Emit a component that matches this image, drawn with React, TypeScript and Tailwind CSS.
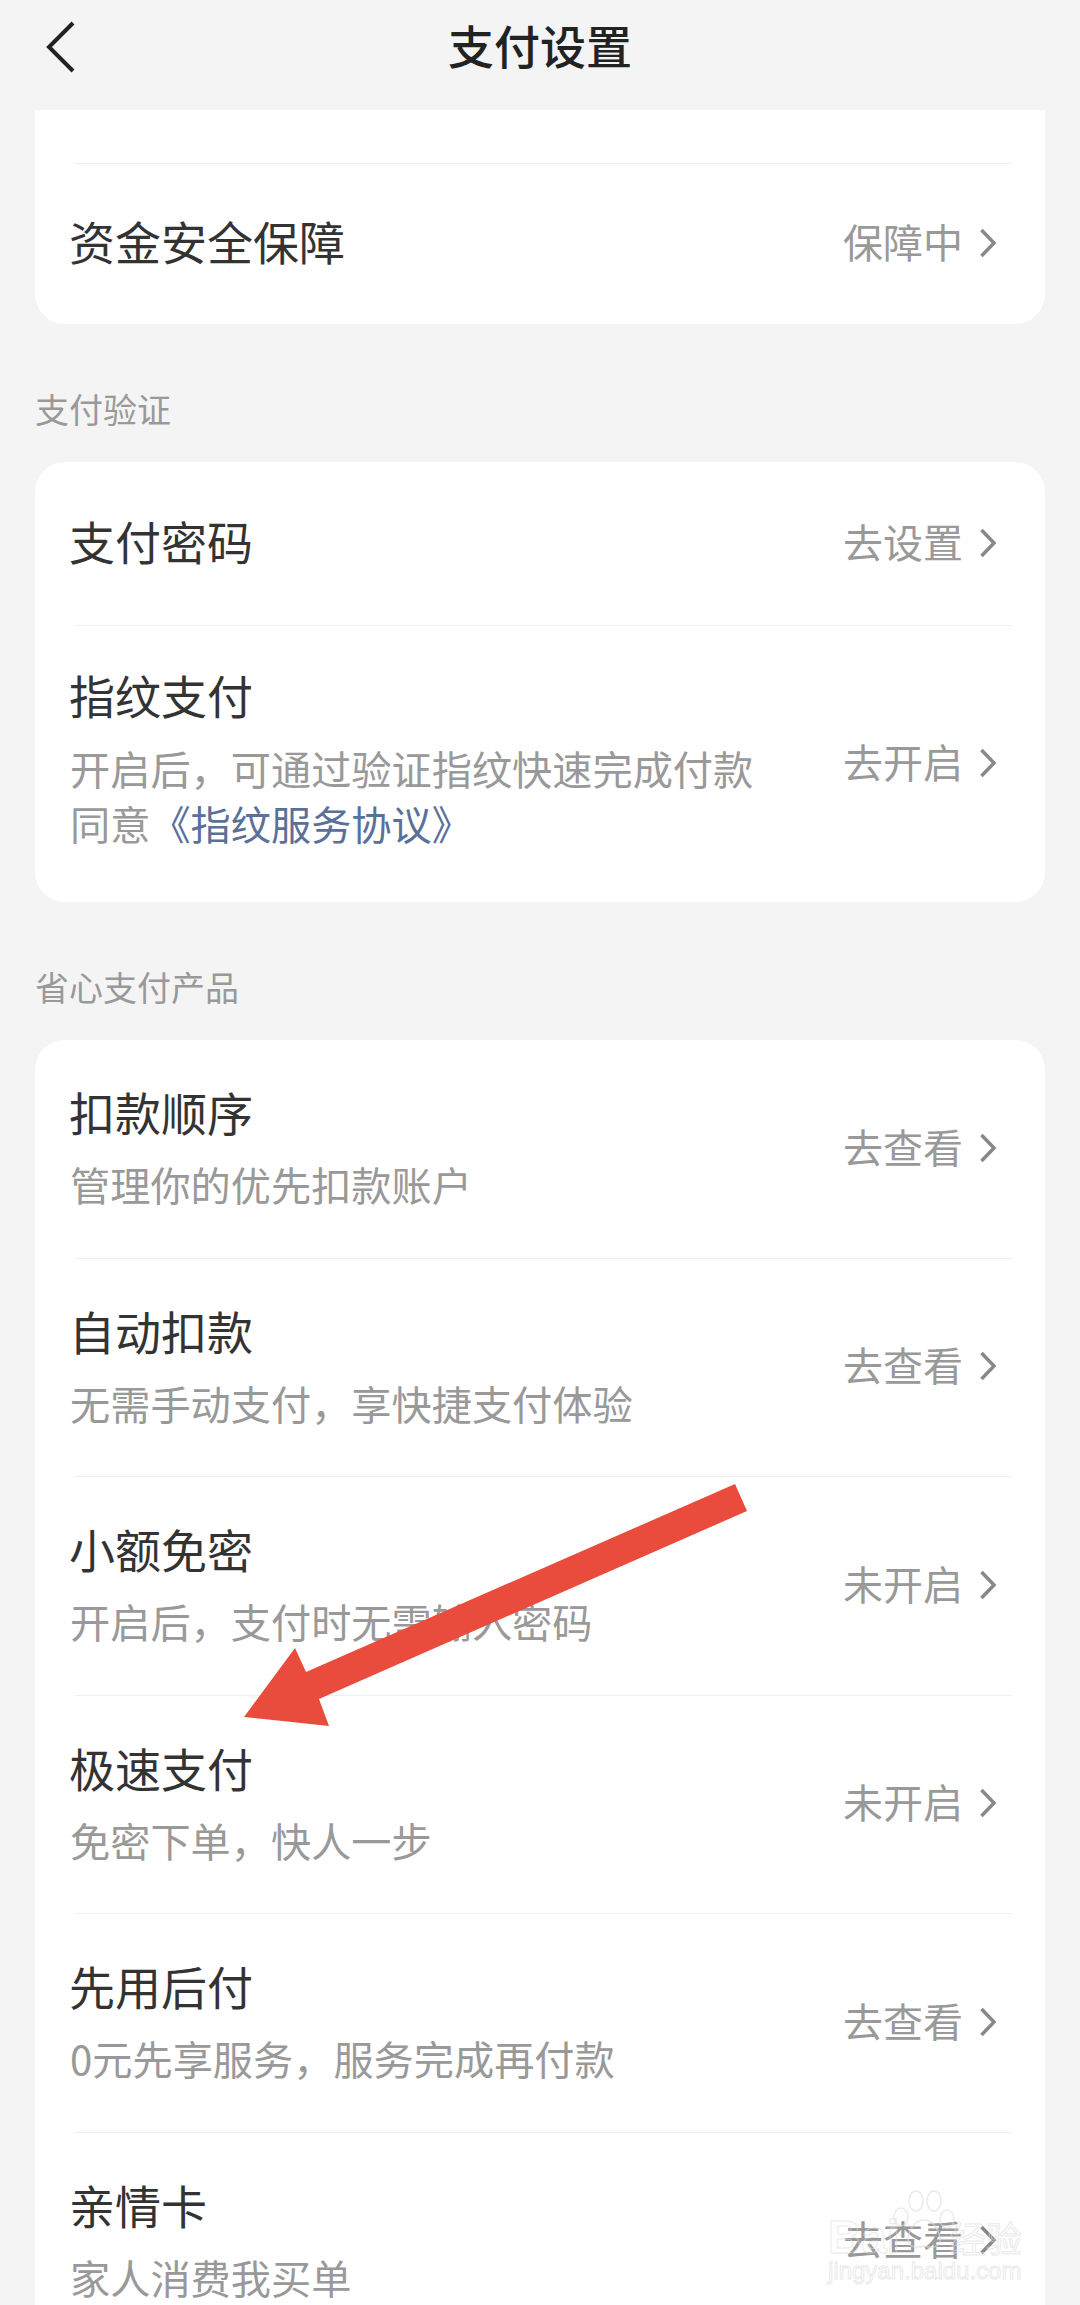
import React from 'react';

const cjk = "font-['Noto_Sans_CJK_SC','Noto_Sans',sans-serif]";

const Chevron: React.FC = () => (
  <svg width="18" height="30" viewBox="0 0 18 30" fill="none" className="ml-[16px] mb-[2px] shrink-0">
    <path d="M2.5 2 L15 15 L2.5 28" stroke="#888888" strokeWidth="3.5" />
  </svg>
);

const Divider: React.FC = () => <div className="ml-[40px] mr-[33px] h-px bg-[#eeeeee]" />;

const Label: React.FC<{ text: string }> = ({ text }) => (
  <div className="pt-[60px] pb-[29px] text-[34px] leading-[49px] text-[#999999]">{text}</div>
);

const Right: React.FC<{ text: string }> = ({ text }) => (
  <div className="flex items-center text-[40px] leading-[50px] text-[#999999] shrink-0">
    <span className="mb-[6px]">{text}</span>
    <Chevron />
  </div>
);

const rows = [
  { title: '扣款顺序', sub: '管理你的优先扣款账户', right: '去查看' },
  { title: '自动扣款', sub: '无需手动支付，享快捷支付体验', right: '去查看' },
  { title: '小额免密', sub: '开启后，支付时无需输入密码', right: '未开启' },
  { title: '极速支付', sub: '免密下单，快人一步', right: '未开启' },
  { title: '先用后付', sub: '0元先享服务，服务完成再付款', right: '去查看' },
  { title: '亲情卡', sub: '家人消费我买单', right: '去查看' },
];

const Row: React.FC<{ title: string; sub: string; right: string }> = ({ title, sub, right }) => (
  <div className="h-[217.5px] pl-[35px] pr-[48px] flex items-center justify-between">
    <div className="pb-[5px]">
      <div className="-ml-px text-[46px] leading-[60px] text-[#333333]">{title}</div>
      <div className="mt-[15px] text-[40.2px] leading-[55px] text-[#999999]">{sub}</div>
    </div>
    <Right text={right} />
  </div>
);

const Watermark: React.FC = () => (
  <div className="absolute left-[828px] top-[2190px] w-[194px] h-[92px] opacity-60 pointer-events-none">
    <svg width="70" height="62" viewBox="0 0 70 62" fill="none" stroke="#dddddd" strokeWidth="1.5" className="absolute left-[62px] top-0">
      <ellipse cx="11" cy="27" rx="7" ry="9" />
      <ellipse cx="26" cy="11" rx="7" ry="10" />
      <ellipse cx="44" cy="11" rx="7" ry="10" />
      <ellipse cx="57" cy="29" rx="7" ry="9" />
      <path d="M34 30 C24 30 18 42 18 50 C18 58 28 58 34 56 C40 58 50 58 50 50 C50 42 44 30 34 30 Z" />
    </svg>
    <div className="absolute left-0 top-[22px] text-[46px] leading-[50px] font-bold text-transparent [-webkit-text-stroke:1px_#dddddd] font-['Liberation_Sans',sans-serif]">Bai</div>
    <div className="absolute right-0 top-[24px] text-[36px] leading-[46px] text-transparent [-webkit-text-stroke:1px_#dddddd]">经验</div>
    <div className="absolute left-0 top-[66px] text-[24px] leading-[30px] text-transparent [-webkit-text-stroke:1px_#dddddd] font-['Liberation_Sans',sans-serif]">jingyan.baidu.com</div>
  </div>
);

export default function App() {
  return (
    <div className={`relative w-[1080px] h-[2305px] overflow-hidden bg-[#f4f4f4] ${cjk}`}>
      <header className="relative h-[110px] flex items-center justify-center">
        <svg width="32" height="54" viewBox="0 0 32 54" fill="none" className="absolute left-[45px] top-[20px]">
          <path d="M28 3 L4 27 L28 51" stroke="#222222" strokeWidth="4" />
        </svg>
        <h1 className="text-[46px] leading-[60px] font-medium text-[#222222] -mt-[23px]">支付设置</h1>
      </header>

      <main className="mx-[35px]">
        <section className="bg-white rounded-b-[30px]">
          <div className="h-[53px]" />
          <Divider />
          <div className="h-[160px] pl-[35px] pr-[48px] flex items-center justify-between">
            <div className="-ml-px pb-[8px] text-[46px] leading-[60px] text-[#333333]">资金安全保障</div>
            <Right text="保障中" />
          </div>
        </section>

        <Label text="支付验证" />

        <section className="bg-white rounded-[30px]">
          <div className="h-[163px] pl-[35px] pr-[48px] flex items-center justify-between">
            <div className="-ml-px pb-[8px] text-[46px] leading-[60px] text-[#333333]">支付密码</div>
            <Right text="去设置" />
          </div>
          <Divider />
          <div className="h-[276px] pl-[35px] pr-[48px] flex items-center justify-between">
            <div className="pb-[14px]">
              <div className="-ml-px text-[46px] leading-[60px] text-[#333333]">指纹支付</div>
              <div className="mt-[16px] text-[40.2px] leading-[55px] text-[#999999]">
                <div>开启后，可通过验证指纹快速完成付款</div>
                <div>
                  同意<span className="text-[#5a7099]">《指纹服务协议》</span>
                </div>
              </div>
            </div>
            <Right text="去开启" />
          </div>
        </section>

        <Label text="省心支付产品" />

        <section className="bg-white rounded-t-[30px]">
          {rows.map((row, i) => (
            <React.Fragment key={row.title}>
              {i > 0 && <Divider />}
              <Row {...row} />
            </React.Fragment>
          ))}
        </section>
      </main>

      <Watermark />

      {/* annotation arrow drawn over the screenshot */}
      <svg width="1080" height="2305" viewBox="0 0 1080 2305" className="absolute left-0 top-0 pointer-events-none">
        <polygon points="735,1484 747,1511 319,1699 329,1726 244,1717 295,1648 306,1672" fill="#e94b3c" />
      </svg>
    </div>
  );
}
